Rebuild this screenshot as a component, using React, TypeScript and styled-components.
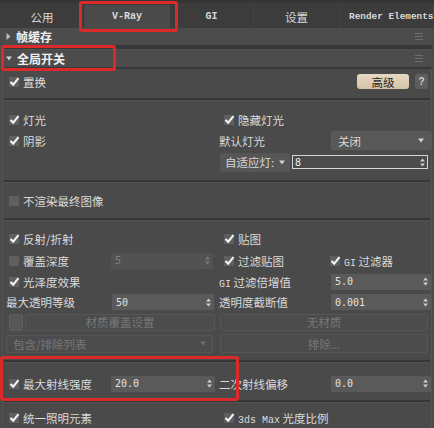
import React from "react";
import styled, { createGlobalStyle } from "styled-components";

const Global = createGlobalStyle`
  html, body { margin: 0; padding: 0; background: #4a4a4a; }
  body { font-family: "Noto Sans CJK SC", "Noto Sans", sans-serif; color: #dadada; }
`;

const Screen = styled.div`
  position: relative;
  width: 434px;
  height: 428px;
  overflow: hidden;
  background: #4a4a4a;
  display: flex;
  flex-direction: column;
`;

const TabBar = styled.div`
  display: grid;
  grid-template-columns: 85px 85px 84px 86px 1fr;
  height: 29px;
  box-sizing: border-box;
  background: #3c3c3c;
  border-top: 3px solid #353535;
`;

const Tab = styled.div<{ $active?: boolean; $mono?: boolean; $left?: boolean }>`
  display: flex;
  align-items: center;
  justify-content: ${(p) => (p.$left ? "flex-start" : "center")};
  padding-left: ${(p) => (p.$left ? "9px" : "0")};
  margin-top: 2px;
  background: ${(p) => (p.$active ? "#4a4a4a" : "transparent")};
  border-right: 1px solid ${(p) => (p.$active ? "#4a4a4a" : "#444")};
  font-family: ${(p) => (p.$mono ? `"Liberation Mono", monospace` : `"Noto Sans CJK SC", sans-serif`)};
  font-size: ${(p) => (p.$mono ? (p.$left ? "9.4px" : "10px") : "11.5px")};
  font-weight: ${(p) => (p.$mono ? "bold" : "normal")};
  color: #d8d8d8;
  white-space: nowrap;
`;

const Rollout = styled.div`
  display: flex;
  align-items: center;
  height: 17px;
  margin: 0 2px;
  padding: 0 9px 0 4px;
  background: #4c4c4c;
  border-bottom: 2px solid #383838;
  font-size: 12px;
  font-weight: bold;
  color: #f2f2f2;
`;

const RolloutTitle = styled.span`
  flex: 1;
  margin-left: 5px;
`;

const Panel = styled.div`
  display: flex;
  flex-direction: column;
  margin: 0 2px;
  border-left: 1px solid #515151;
  border-right: 1px solid #545454;
`;

const Group = styled.div<{ $pt: number; $pb: number }>`
  display: flex;
  flex-direction: column;
  padding: ${(p) => p.$pt}px 0 ${(p) => p.$pb}px;
`;

const Separator = styled.div`
  height: 2px;
  margin: 0 1px;
  background: #363636;
  border-bottom: 1px solid #525252;
`;

const Row = styled.div<{ $h?: number }>`
  display: grid;
  grid-template-columns: 213px 1fr;
  height: ${(p) => p.$h ?? 21}px;
  align-items: center;
`;

const Cell = styled.div<{ $pl?: number }>`
  display: flex;
  align-items: center;
  height: 100%;
  padding-left: ${(p) => p.$pl ?? 0}px;
  box-sizing: border-box;
  min-width: 0;
`;

const LabeledCell = styled.div<{ $lw: number; $cw: number; $pl: number }>`
  display: grid;
  grid-template-columns: ${(p) => p.$lw}px ${(p) => p.$cw}px;
  align-items: center;
  padding-left: ${(p) => p.$pl}px;
`;

const Label = styled.span<{ $dim?: boolean }>`
  font-size: 11.5px;
  color: ${(p) => (p.$dim ? "#7a7a7a" : "#dadada")};
  white-space: nowrap;
`;

const Mono = styled.span`
  font-family: "Liberation Mono", monospace;
  font-size: 10px;
`;

const CheckWrap = styled.label<{ $w?: number }>`
  display: flex;
  align-items: center;
  gap: 4px;
  width: ${(p) => (p.$w ? `${p.$w}px` : "auto")};
`;

const Box = styled.span`
  position: relative;
  display: inline-flex;
  width: 10px;
  height: 10px;
  background: #5f5f5f;
  flex: none;
`;

const Tick = styled.svg`
  position: absolute;
  left: 0;
  top: -1px;
`;

function Check({ on, children, w }: { on?: boolean; children: React.ReactNode; w?: number }) {
  return (
    <CheckWrap $w={w}>
      <Box>
        {on && (
          <Tick width="11" height="11" viewBox="0 0 11 11">
            <path d="M1.5 6 L4.2 8.6 L9.5 2.2" stroke="#f4f4f4" strokeWidth="2.1" fill="none" />
          </Tick>
        )}
      </Box>
      <Label>{children}</Label>
    </CheckWrap>
  );
}

const SpinBox = styled.div<{ $w: number; $dim?: boolean }>`
  display: flex;
  align-items: center;
  justify-content: space-between;
  width: ${(p) => p.$w}px;
  height: 16px;
  box-sizing: border-box;
  padding: 0 3px 0 4px;
  background: ${(p) => (p.$dim ? "#525252" : "#5a5a5a")};
  font-family: "DejaVu Sans Mono", monospace;
  font-size: 10px;
  color: ${(p) => (p.$dim ? "#808080" : "#e2e2e2")};
`;

function Arrows({ dim }: { dim?: boolean }) {
  const c = dim ? "#7a7a7a" : "#d0d0d0";
  return (
    <svg width="5" height="9" viewBox="0 0 5 9">
      <path d="M0 3.5 L2.5 0.5 L5 3.5 Z" fill={c} />
      <path d="M0 5.5 L2.5 8.5 L5 5.5 Z" fill={c} />
    </svg>
  );
}

function Spinner({ value, w, dim }: { value: string; w: number; dim?: boolean }) {
  return (
    <SpinBox $w={w} $dim={dim}>
      <span>{value}</span>
      <Arrows dim={dim} />
    </SpinBox>
  );
}

const Drop = styled.div<{ $w: number; $h: number; $dim?: boolean }>`
  display: flex;
  align-items: center;
  justify-content: space-between;
  width: ${(p) => p.$w}px;
  height: ${(p) => p.$h}px;
  box-sizing: border-box;
  padding: 0 6px 0 6px;
  background: ${(p) => (p.$dim ? "#4c4c4c" : "#585858")};
  border: 1px solid ${(p) => (p.$dim ? "#575757" : "#5c5c5c")};
  border-radius: 2px;
  font-size: 11.5px;
  color: ${(p) => (p.$dim ? "#777" : "#dadada")};
`;

function DownTri({ c }: { c: string }) {
  return (
    <svg width="6" height="5" viewBox="0 0 6 5">
      <path d="M0 0.5 L6 0.5 L3 4.5 Z" fill={c} />
    </svg>
  );
}

const AdaptBtn = styled.div`
  display: flex;
  align-items: center;
  gap: 5px;
  width: 70px;
  height: 19px;
  box-sizing: border-box;
  padding-left: 5px;
  background: #565656;
  border-radius: 2px;
  font-size: 11.5px;
  color: #d6d6d6;
  margin-left: 4px;
`;

const NumField = styled.div`
  display: flex;
  align-items: center;
  justify-content: space-between;
  width: 136px;
  height: 14px;
  margin-left: 2px;
  box-sizing: border-box;
  padding: 0 2px 0 2px;
  border: 1px solid #d6d6d6;
  background: #4b4b4b;
  font-family: "DejaVu Sans Mono", monospace;
  font-size: 10px;
  color: #eee;
`;

const GhostBtn = styled.div<{ $w: number; $h: number }>`
  display: flex;
  align-items: center;
  justify-content: center;
  width: ${(p) => p.$w}px;
  height: ${(p) => p.$h}px;
  box-sizing: border-box;
  background: #4c4c4c;
  border: 1px solid #575757;
  border-radius: 2px;
  font-size: 11.5px;
  color: #777;
`;

const ToggleBox = styled.div`
  width: 12px;
  height: 15px;
  margin-right: 2px;
  background: #575757;
  border: 1px solid #5e5e5e;
  border-radius: 2px;
`;

const AdvBtn = styled.div`
  display: flex;
  align-items: center;
  justify-content: center;
  width: 52px;
  height: 15px;
  border-radius: 3px;
  background: linear-gradient(#e6d8c4, #d6c3a8);
  font-size: 11.5px;
  color: #1e1e1e;
  margin-left: auto;
`;

const HelpBtn = styled.div`
  display: flex;
  align-items: center;
  justify-content: center;
  width: 13px;
  height: 15px;
  margin: 0 3px 0 6px;
  background: #5e5e5e;
  border-radius: 2px;
  font-family: "Liberation Sans", sans-serif;
  font-size: 10px;
  font-weight: bold;
  color: #d0d0d0;
`;

const Mark = styled.div<{ $x: number; $y: number; $w: number; $h: number }>`
  position: absolute;
  left: ${(p) => p.$x}px;
  top: ${(p) => p.$y}px;
  width: ${(p) => p.$w}px;
  height: ${(p) => p.$h}px;
  box-sizing: border-box;
  border: 3px solid #dc2a2a;
  border-radius: 3px;
  pointer-events: none;
`;

function RightTri() {
  return (
    <svg width="5" height="7" viewBox="0 0 5 7">
      <path d="M0.5 0 L4.5 3.5 L0.5 7 Z" fill="#bdbdbd" />
    </svg>
  );
}

function Hamburger() {
  return (
    <svg width="8" height="7" viewBox="0 0 8 7">
      <path d="M0 0.5 H8 M0 3.5 H8 M0 6.5 H8" stroke="#6e6e6e" strokeWidth="1" />
    </svg>
  );
}

export default function App() {
  return (
    <>
      <Global />
      <Screen>
        <TabBar>
          <Tab>公用</Tab>
          <Tab $active $mono>V-Ray</Tab>
          <Tab $mono>GI</Tab>
          <Tab>设置</Tab>
          <Tab $mono $left>Render Elements</Tab>
        </TabBar>

        <Rollout>
          <RightTri />
          <RolloutTitle>帧缓存</RolloutTitle>
          <Hamburger />
        </Rollout>
        <Separator />
        <Rollout>
          <DownTri c="#d0d0d0" />
          <RolloutTitle>全局开关</RolloutTitle>
          <Hamburger />
        </Rollout>

        <Panel>
          <Group $pt={3} $pb={7}>
            <Row $h={19}>
              <Cell $pl={6}>
                <Check on>置换</Check>
              </Cell>
              <Cell>
                <AdvBtn>高级</AdvBtn>
                <HelpBtn>?</HelpBtn>
              </Cell>
            </Row>
          </Group>
          <Separator />

          <Group $pt={8} $pb={7}>
            <Row>
              <Cell $pl={6}>
                <Check on>灯光</Check>
              </Cell>
              <Cell $pl={8}>
                <Check on>隐藏灯光</Check>
              </Cell>
            </Row>
            <Row>
              <Cell $pl={6}>
                <Check on>阴影</Check>
              </Cell>
              <LabeledCell $lw={112} $cw={100} $pl={3}>
                <Label>默认灯光</Label>
                <Drop $w={100} $h={19}>
                  <span>关闭</span>
                  <DownTri c="#d0d0d0" />
                </Drop>
              </LabeledCell>
            </Row>
            <Row $h={22}>
              <Cell />
              <Cell>
                <AdaptBtn>
                  自适应灯:
                  <DownTri c="#cfcfcf" />
                </AdaptBtn>
                <NumField>
                  <span>8</span>
                  <Arrows />
                </NumField>
              </Cell>
            </Row>
          </Group>
          <Separator />

          <Group $pt={7} $pb={7}>
            <Row>
              <Cell $pl={6}>
                <Check>不渲染最终图像</Check>
              </Cell>
              <Cell />
            </Row>
          </Group>
          <Separator />

          <Group $pt={7} $pb={5}>
            <Row $h={22}>
              <Cell $pl={6}>
                <Check on>反射/折射</Check>
              </Cell>
              <Cell $pl={8}>
                <Check on>贴图</Check>
              </Cell>
            </Row>
            <Row>
              <Cell $pl={6}>
                <Check w={102}>覆盖深度</Check>
                <Spinner value="5" w={102} dim />
              </Cell>
              <Cell $pl={8}>
                <Check on w={106}>过滤贴图</Check>
                <Check on>
                  <Mono>GI</Mono> 过滤器
                </Check>
              </Cell>
            </Row>
            <Row>
              <Cell $pl={6}>
                <Check on>光泽度效果</Check>
              </Cell>
              <LabeledCell $lw={112} $cw={100} $pl={3}>
                <Label>
                  <Mono>GI</Mono> 过滤倍增值
                </Label>
                <Spinner value="5.0" w={100} />
              </LabeledCell>
            </Row>
            <Row $h={20}>
              <LabeledCell $lw={106} $cw={102} $pl={3}>
                <Label>最大透明等级</Label>
                <Spinner value="50" w={102} />
              </LabeledCell>
              <LabeledCell $lw={112} $cw={100} $pl={3}>
                <Label>透明度截断值</Label>
                <Spinner value="0.001" w={100} />
              </LabeledCell>
            </Row>
            <Row $h={20}>
              <Cell $pl={6}>
                <ToggleBox />
                <GhostBtn $w={190} $h={17}>材质覆盖设置</GhostBtn>
              </Cell>
              <Cell $pl={4}>
                <GhostBtn $w={208} $h={17}>无材质</GhostBtn>
              </Cell>
            </Row>
            <Row $h={23}>
              <Cell $pl={3}>
                <Drop $w={207} $h={18} $dim>
                  <span>包含/排除列表</span>
                  <DownTri c="#6e6e6e" />
                </Drop>
              </Cell>
              <Cell $pl={4}>
                <GhostBtn $w={208} $h={19}>排除...</GhostBtn>
              </Cell>
            </Row>
          </Group>
          <Separator />

          <Group $pt={10} $pb={6}>
            <Row>
              <Cell $pl={6}>
                <Check on w={102}>最大射线强度</Check>
                <Spinner value="20.0" w={104} />
              </Cell>
              <LabeledCell $lw={112} $cw={100} $pl={3}>
                <Label>二次射线偏移</Label>
                <Spinner value="0.0" w={100} />
              </LabeledCell>
            </Row>
          </Group>
          <Separator />

          <Group $pt={4} $pb={0}>
            <Row>
              <Cell $pl={6}>
                <Check on>统一照明元素</Check>
              </Cell>
              <Cell $pl={8}>
                <Check on>
                  <Mono>3ds Max</Mono> 光度比例
                </Check>
              </Cell>
            </Row>
          </Group>
        </Panel>

        <Mark $x={79} $y={1} $w={99} $h={31} />
        <Mark $x={1} $y={45} $w={115} $h={26} />
        <Mark $x={0} $y={356} $w={239} $h={45} />
      </Screen>
    </>
  );
}
